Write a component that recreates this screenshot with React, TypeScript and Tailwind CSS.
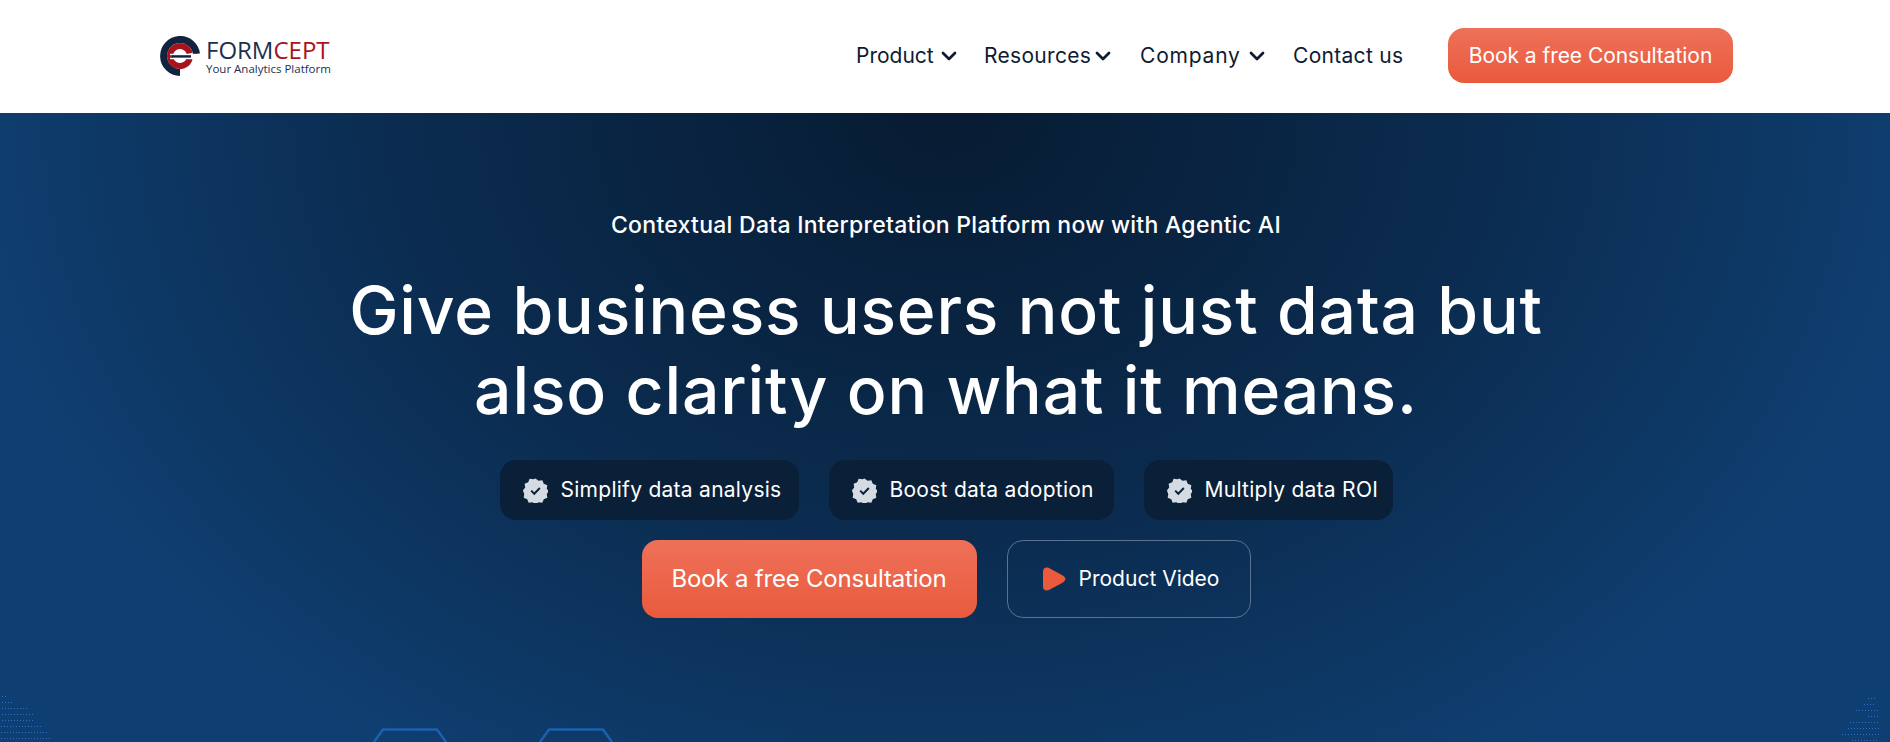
import React from 'react';
import { ChevronDown } from 'lucide-react';

const font = { fontFamily: 'Inter, "Open Sans", sans-serif' };

const navItems = [
  { label: 'Product', cls: 'w-[78px]', gap: 'mr-[23px]', chevron: true },
  { label: 'Resources', cls: 'w-[104px] tracking-[0.3px]', gap: 'mr-[25px]', chevron: true },
  { label: 'Company', cls: 'w-[102px] tracking-[0.8px]', gap: 'mr-[24px]', chevron: true },
  { label: 'Contact us', cls: 'w-[110px] tracking-[0.3px]', gap: 'mr-[25px]', chevron: false },
];

const pills = [
  { label: 'Simplify data analysis', w: 'w-[299px]' },
  { label: 'Boost data adoption', w: 'w-[285px]' },
  { label: 'Multiply data ROI', w: 'w-[249px]' },
];

// [y, from x, to x] of the faint dot rows in the bottom corners
const leftDots = [
  [0, 2, 5], [6, 2, 11], [12, 2, 28], [18, 2, 33], [24, 2, 32], [30, 1, 40], [36, 1, 46], [42, 1, 50],
];
const rightDots = [
  [2, 30, 38], [8, 26, 36], [14, 18, 40], [20, 30, 40], [26, 12, 40], [32, 10, 40], [38, 4, 40], [44, 14, 40],
];

const Dots = ({ rows, className }: { rows: number[][]; className: string }) => (
  <svg className={className} width="52" height="46" viewBox="0 0 52 46">
    {rows.map(([y, from, to]) => {
      const cells = [];
      for (let x = from; x <= to; x += 3) cells.push(x);
      return cells.map((x) => <rect key={`${y}-${x}`} x={x} y={y} width="1" height="1" fill="#2a72c4" />);
    })}
  </svg>
);

const Logo = () => (
  <div className="flex items-center gap-[6px] mb-[1px]">
    <svg width="40" height="40" viewBox="0 0 40 40" className="shrink-0">
      <path d="M36.500 18 A16.500 16.500 0 1 0 20 36.500" fill="none" stroke="#12233f" strokeWidth="7" />
      <path d="M29.700 17.500 A10 10 0 1 0 29.700 22.500" fill="none" stroke="#a8141c" strokeWidth="6" />
      <rect x="10" y="17.800" width="30" height="1.400" fill="#ffffff" />
      <rect x="12" y="19.200" width="19" height="2.600" fill="#12233f" />
      <rect x="10" y="21.800" width="24" height="1.400" fill="#ffffff" />
    </svg>
    <div className="flex flex-col" style={{ fontFamily: '"Open Sans", sans-serif' }}>
      <div className="flex text-[24px] leading-[24px]">
        <span className="text-[#1c2f4f]">FORM</span>
        <span className="text-[#a8141c]">CEPT</span>
      </div>
      <span className="mt-[1px] text-[11.500px] leading-[12px] font-medium text-[#1c2f4f] whitespace-nowrap">Your Analytics Platform</span>
    </div>
  </div>
);

const Badge = () => (
  <svg width="25" height="25" viewBox="0 0 26 26" className="shrink-0">
    <path
      d="M13 0.500l3.200 2.400 3.900-.600 1.500 3.700 3.700 1.500-.600 3.900 2.400 2-2.400 3.200.600 3.900-3.700 1.500-1.500 3.700-3.900-.600-3.200 2.400-3.200-2.400-3.900.600-1.500-3.700-3.700-1.500.600-3.900L-.100 13l2.400-3.200-.600-3.900 3.700-1.500 1.500-3.700 3.900.600z"
      fill="#d5dbe3"
    />
    <path d="M8.500 13.200l3.200 3.200 5.800-6" fill="none" stroke="#0a2038" strokeWidth="2" />
  </svg>
);

const Hex = ({ className }: { className: string }) => (
  <svg className={className} width="74" height="14" viewBox="0 0 74 14">
    <path d="M1 14 L10 1.500 H64 L73 14" fill="none" stroke="#1d60ad" strokeWidth="2.500" />
  </svg>
);

export default function App() {
  return (
    <div className="w-full h-[742px] overflow-hidden flex flex-col" style={font}>
      <header className="h-[113px] bg-white flex items-center justify-between pl-[160px] pr-[157px] shrink-0">
        <Logo />
        <nav className="flex items-center mb-[2px]">
          {navItems.map((item) => (
            <a key={item.label} className={`flex items-center ${item.gap} text-[21px] text-[#0e1b33]`}>
              <span className={`${item.cls} whitespace-nowrap`}>{item.label}</span>
              {item.chevron && <ChevronDown size={24} strokeWidth={2.75} className="ml-[3px]" />}
            </a>
          ))}
          <button className="ml-[20px] w-[285px] h-[55px] rounded-[16px] bg-gradient-to-b from-[#ee7059] to-[#e95a3c] text-white text-[21px] tracking-[-0.05px]">
            Book a free Consultation
          </button>
        </nav>
      </header>

      <section className="relative flex-1 overflow-hidden flex flex-col items-center pl-[2px] text-white bg-[radial-gradient(ellipse_1000px_780px_at_50%_0%,#071b32_0%,#0b2c50_55%,#0f3f72_100%)]">
        <p className="mt-[96px] text-[23px] leading-[32px] font-medium tracking-[0.27px]">
          Contextual Data Interpretation Platform now with Agentic AI
        </p>
        <h1 className="mt-[29px] text-[66px] leading-[80px] font-medium text-center tracking-[0.85px]">
          Give business users not just data but
          <br />
          also clarity on what it means.
        </h1>
        <div className="mt-[30px] flex gap-[30px]">
          {pills.map((pill) => (
            <div key={pill.label} className={`${pill.w} h-[60px] rounded-[16px] bg-[#0a2038] flex items-center gap-[13px] pl-[23px] text-[21px] tracking-[0.27px] whitespace-nowrap`}>
              <Badge />
              {pill.label}
            </div>
          ))}
        </div>
        <div className="mt-[20px] flex gap-[30px]">
          <button className="w-[335px] h-[78px] rounded-[16px] bg-gradient-to-b from-[#ee7059] to-[#e95a3c] text-[24px] tracking-[-0.2px]">
            Book a free Consultation
          </button>
          <button className="w-[244px] h-[78px] pl-[4px] rounded-[16px] border border-[#5b7291] flex items-center justify-center gap-[13px] text-[21px]">
            <svg width="24" height="24" viewBox="0 0 24 24">
              <path d="M1 4.500C1 1 4-.300 7 1L20 8C24.500 10.500 24.500 13.500 20 16L7 23C4 24.300 1 23 1 19.500Z" fill="#ec5a3d" />
            </svg>
            Product Video
          </button>
        </div>

        <Hex className="absolute left-[373px] top-[615px]" />
        <Hex className="absolute left-[539px] top-[615px]" />
        <Dots rows={leftDots} className="absolute left-0 top-[583px]" />
        <Dots rows={rightDots} className="absolute right-0 top-[583px]" />
      </section>
    </div>
  );
}
